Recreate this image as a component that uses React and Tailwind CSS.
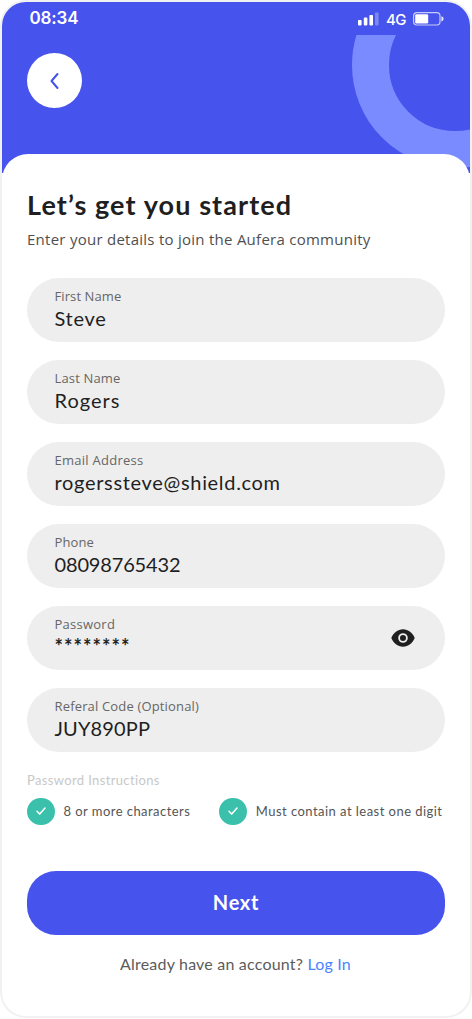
import React from 'react';

function StatusBar() {
  return (
    <div className="flex h-[33px] items-center justify-between pl-[27.5px] pr-[26px] font-['Inter',sans-serif] font-semibold text-white">
      <span className="text-[17px] leading-none tracking-[-0.15px]">08:34</span>
      <div className="flex items-center gap-[7px]">
        <svg width="22" height="14" viewBox="0 0 22 14" fill="#fff">
          <rect x="1" y="8" width="3.6" height="5.4" rx="0.8" />
          <rect x="6.8" y="5.6" width="3.6" height="7.8" rx="0.8" />
          <rect x="12.4" y="3" width="3.6" height="10.4" rx="0.8" />
          <rect x="18" y="0.4" width="3.6" height="13" rx="0.8" opacity="0.3" />
        </svg>
        <span className="mt-px text-[15px] font-medium leading-none tracking-[-0.5px]">4G</span>
        <svg width="31" height="14" viewBox="0 0 31 14" fill="none">
          <rect x="0.6" y="0.6" width="26.4" height="12.4" rx="3.2" stroke="#fff" strokeOpacity="0.7" strokeWidth="1.2" />
          <rect x="2.2" y="2.2" width="13" height="9.2" rx="1.2" fill="#fff" />
          <path d="M28.4 4.2c1.600.4 2.200 1.400 2.200 2.600s-.6 2.200-2.200 2.600z" fill="#fff" fillOpacity="0.85" />
        </svg>
      </div>
    </div>
  );
}

function Field({ label, labelClass, value, valueClass, children }) {
  return (
    <div className="flex h-16 items-center justify-between rounded-full bg-[#eeeeee] pl-[27.5px] pr-[30px]">
      <div className="flex h-full flex-col pt-[9px]">
        <span className={`h-[18px] whitespace-nowrap font-['Open_Sans',sans-serif] text-[13px] leading-[18px] text-[#666666] ${labelClass}`}>{label}</span>
        <span className={`h-[26px] whitespace-nowrap text-[20px] leading-[26px] text-[#1f1f1f] ${valueClass}`}>{value}</span>
      </div>
      {children}
    </div>
  );
}

function Check({ children, className }) {
  return (
    <div className="flex items-center gap-[9px]">
      <span className="flex size-[27.5px] items-center justify-center rounded-full bg-[#3bc1ab]">
        <svg width="12" height="10" viewBox="0 0 12 10" fill="none" stroke="#fff" strokeWidth="1.5" strokeLinecap="round" strokeLinejoin="round">
          <path d="M2 5.200l2.700 2.900L10 2" />
        </svg>
      </span>
      <span className={`whitespace-nowrap text-[13px] leading-5 text-[#555555] ${className}`}>{children}</span>
    </div>
  );
}

export default function App() {
  return (
    <div className="h-[1019px] w-[472px] overflow-hidden bg-white p-0.5 font-['Lato',sans-serif]">
      <div className="h-[1014px] w-[468px] rounded-[24px] bg-white shadow-[0_0_0_2px_#f1f1f1]">
        <div className="relative h-[171px] overflow-hidden rounded-t-[24px] bg-[#4653ec]">
          <svg className="absolute right-0 top-[33px]" width="120" height="138" viewBox="0 0 120 138" fill="none">
            <circle cx="105" cy="30" r="84.500" stroke="#7a8bff" strokeWidth="37" />
          </svg>
          <div className="relative">
            <StatusBar />
            <button className="ml-[25px] mt-[18px] flex size-[55px] items-center justify-center rounded-full bg-white" aria-label="Back">
              <svg width="10" height="18" viewBox="0 0 10 18" fill="none" stroke="#4653ec" strokeWidth="2" strokeLinecap="round" strokeLinejoin="round">
                <path d="M7.500 2L1.500 9l6 7" />
              </svg>
            </button>
          </div>
        </div>

        <div className="relative -mt-[19.500px] rounded-t-[26px] bg-white px-[25px] pt-[33.500px]">
          <h1 className="whitespace-nowrap text-[27px] font-bold leading-9 tracking-[1.100px] text-[#1f1f1f]">Let’s get you started</h1>
          <p className="mt-[6px] whitespace-nowrap font-['Open_Sans',sans-serif] text-[15px] font-medium leading-5 tracking-[0.260px] text-[#4f4f4f]">Enter your details to join the Aufera community</p>

          <div className="mt-[29px] flex w-[418px] flex-col gap-[18px]">
            <Field label="First Name" labelClass="tracking-[0.1px]" value="Steve" valueClass="tracking-[0.7px]" />
            <Field label="Last Name" labelClass="tracking-[0.15px]" value="Rogers" valueClass="tracking-[1px]" />
            <Field label="Email Address" labelClass="tracking-[0.26px]" value="rogerssteve@shield.com" valueClass="tracking-[0.68px]" />
            <Field label="Phone" labelClass="tracking-[0.1px]" value="08098765432" valueClass="tracking-[-0.16px]" />
            <Field label="Password" labelClass="tracking-[0.25px]" value="********" valueClass="font-bold tracking-[1px]">
              <svg width="24" height="18" viewBox="0 0 24 18">
                <path d="M12 0.300C6.800 0.300 2.300 3.800.3 9c2 5.200 6.500 8.700 11.700 8.700S21.700 14.200 23.700 9C21.700 3.800 17.200.3 12 .3z" fill="#1f1f1f" />
                <circle cx="12" cy="9" r="3.900" fill="none" stroke="#eeeeee" strokeWidth="1.800" />
              </svg>
            </Field>
            <Field label="Referal Code (Optional)" labelClass="tracking-[0.16px]" value="JUY890PP" valueClass="tracking-[0.15px]" />
          </div>

          <p className="mt-[17.500px] text-[13px] leading-5 tracking-[0.36px] text-[#c8c8c8]">Password Instructions</p>
          <div className="mt-[8px] flex w-[415.500px] justify-between">
            <Check className="tracking-[0.45px]">8 or more characters</Check>
            <Check className="tracking-[0.46px]">Must contain at least one digit</Check>
          </div>

          <button className="mt-[45.500px] flex h-16 w-[418px] items-center justify-center rounded-[29px] bg-[#4653ec] pb-px text-[20px] font-bold tracking-[0.7px] text-white">Next</button>
          <p className="mt-[17px] w-[417px] text-center text-[16px] leading-6 tracking-[0.2px] text-[#5c5c5c]">
            Already have an account? <a className="text-[#4a84ff]">Log In</a>
          </p>
        </div>
      </div>
    </div>
  );
}
